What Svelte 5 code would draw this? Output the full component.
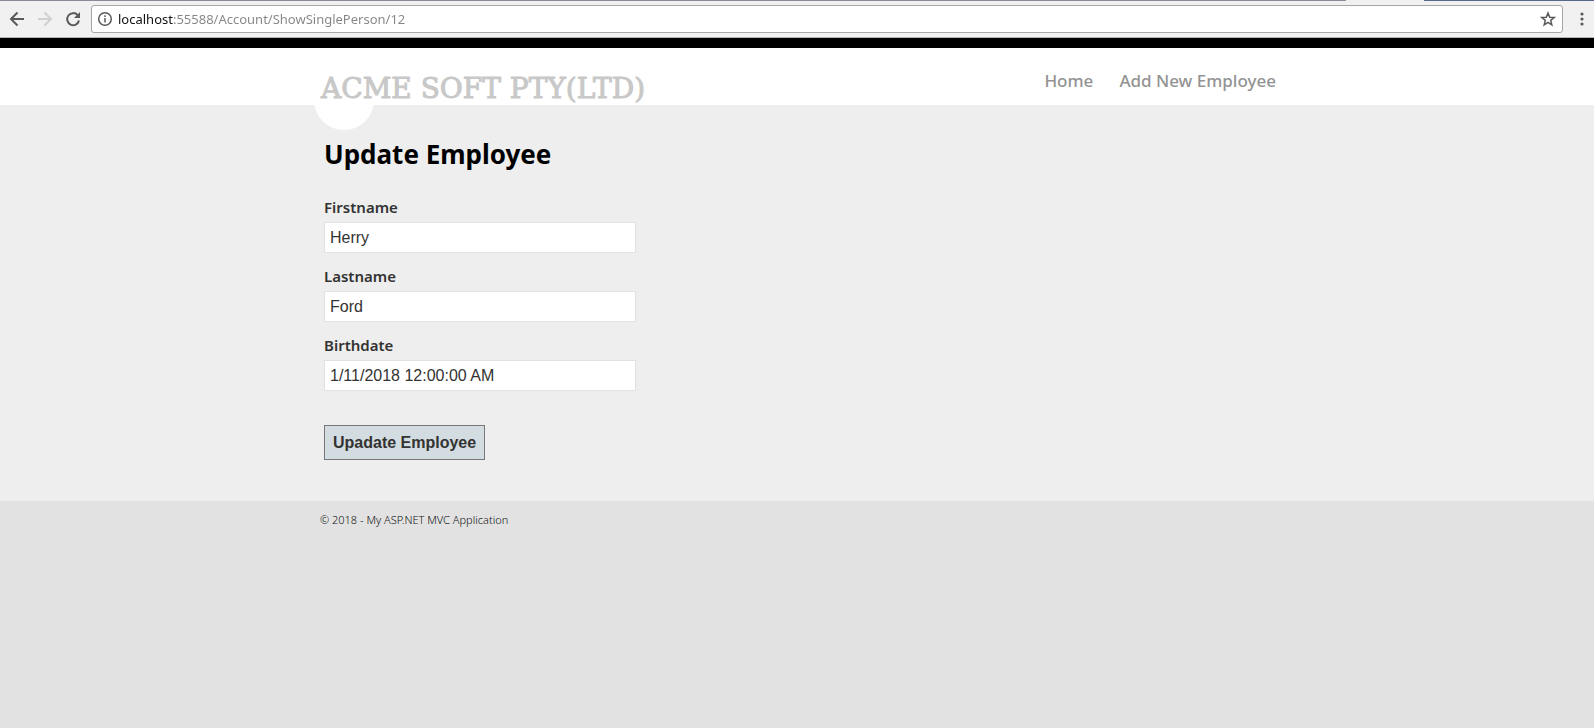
<script>
  let address = $state('localhost:55588/Account/ShowSinglePerson/12');
  let fields = $state([
    { id: 'firstname', label: 'Firstname', value: 'Herry' },
    { id: 'lastname', label: 'Lastname', value: 'Ford' },
    { id: 'birthdate', label: 'Birthdate', value: '1/11/2018 12:00:00 AM' },
  ]);
</script>

<div class="window">
  <div class="tab-edge"><span></span></div>
  <div class="toolbar">
    <button class="tool" type="button" aria-label="Back">
      <svg width="16" height="16" viewBox="0 0 16 16"><path d="M15 8H2.5M8.5 1.5 2 8l6.500 6.500" /></svg>
    </button>
    <button class="tool dim" type="button" aria-label="Forward" disabled>
      <svg width="16" height="16" viewBox="0 0 16 16"><path d="M1 8h12.500M7.500 1.500 14 8l-6.500 6.500" /></svg>
    </button>
    <button class="tool" type="button" aria-label="Reload">
      <svg width="16" height="16" viewBox="0 0 16 16">
        <path d="M12.700 4.200A6 6 0 1 0 14 9.500" />
        <path class="solid" d="M15 1v6H9z" />
      </svg>
    </button>
    <div class="omnibox">
      <svg class="info" width="16" height="16" viewBox="0 0 16 16">
        <circle cx="8" cy="8" r="6.300" />
        <path d="M8 7v4.500M8 4.300v1.600" />
      </svg>
      <input class="address" type="text" aria-label="Address" spellcheck="false" bind:value={address} />
      <button class="star" type="button" aria-label="Bookmark this page">
        <svg width="16" height="16" viewBox="0 0 16 16">
          <path d="M8 2l1.700 4.200 4.500.3-3.500 2.900 1.100 4.400L8 11.400l-3.800 2.400 1.100-4.400L1.800 6.500l4.500-.3z" />
        </svg>
      </button>
    </div>
    <button class="tool menu" type="button" aria-label="Menu">
      <svg width="16" height="16" viewBox="0 0 16 16">
        <circle cx="8" cy="3" r="1.600" /><circle cx="8" cy="8" r="1.600" /><circle cx="8" cy="13" r="1.600" />
      </svg>
    </button>
  </div>

  <header>
    <div class="wrap head">
      <a class="logo" href="#home">ACME SOFT PTY(LTD)</a>
      <nav>
        <a href="#home">Home</a>
        <a href="#add">Add New Employee</a>
      </nav>
    </div>
  </header>

  <main>
    <form class="wrap" onsubmit={(e) => e.preventDefault()}>
      <h1>Update Employee</h1>
      {#each fields as field (field.id)}
        <div class="field">
          <label for={field.id}>{field.label}</label>
          <input id={field.id} type="text" bind:value={field.value} />
        </div>
      {/each}
      <button class="submit" type="submit">Upadate Employee</button>
    </form>
  </main>

  <footer>
    <p class="wrap">© 2018 - My ASP.NET MVC Application</p>
  </footer>
</div>

<style>
  :global(body) {
    margin: 0;
    background: #e2e2e2;
  }
  .window {
    font-family: 'Noto Sans', 'Open Sans', sans-serif;
    color: #333;
  }
  .window * {
    box-sizing: border-box;
  }
  .tab-edge {
    display: flex;
    justify-content: flex-end;
    height: 1px;
    background: #8b8b96;
  }
  .tab-edge span {
    width: 248px;
    border-left: 78px solid #f1f1f1;
    background: #56688c;
  }
  .toolbar {
    display: flex;
    align-items: center;
    height: 37px;
    padding: 0 4px 0 3px;
    background: #f1f1f2;
    border-bottom: 1px solid #b4b4b4;
  }
  .tool,
  .star {
    display: flex;
    align-items: center;
    justify-content: center;
    flex: none;
    width: 28px;
    height: 28px;
    padding: 0;
    border: 0;
    background: none;
  }
  svg {
    display: block;
    flex: none;
    fill: none;
    stroke: #5a5a5a;
    stroke-width: 2;
  }
  .dim svg {
    stroke: #d0d0d0;
  }
  .solid,
  .menu svg {
    fill: #5a5a5a;
    stroke: none;
  }
  .menu {
    width: 16px;
    margin-left: 11px;
  }
  .omnibox {
    display: flex;
    flex: 1;
    align-items: center;
    min-width: 0;
    height: 28px;
    margin-left: 4px;
    padding: 0 0 0 5px;
    background: #fff;
    border: 1px solid #a6a6a6;
    border-radius: 3px;
  }
  .info,
  .star svg {
    stroke-width: 1.5;
  }
  .address {
    flex: 1;
    min-width: 0;
    height: 24px;
    margin-left: 5px;
    padding: 0;
    border: 0;
    outline: 0;
    font: 13px 'Noto Sans', 'Open Sans', sans-serif;
    color: transparent;
    caret-color: #000;
    background: linear-gradient(90deg, #111 55px, #858585 55px);
    background-clip: text;
  }
  .wrap {
    width: 100%;
    max-width: 960px;
    margin: 0 auto;
  }
  header {
    background: #fff;
    border-top: 10px solid #000;
  }
  .head {
    position: relative;
    display: flex;
    justify-content: space-between;
    align-items: flex-start;
    height: 57px;
    padding: 0 1px 0 4px;
  }
  .head::before {
    content: '';
    position: absolute;
    top: 22px;
    left: -3px;
    width: 60px;
    height: 60px;
    border-radius: 50%;
    background: #fff;
  }
  .logo {
    position: relative;
    padding-top: 23px;
    font: 28px/36px 'DejaVu Serif', serif;
    color: #c8c8c8;
    -webkit-text-stroke: 1px #c8c8c8;
    text-decoration: none;
    white-space: nowrap;
  }
  nav {
    display: flex;
    gap: 26px;
    padding-top: 21px;
  }
  nav a {
    font-size: 17px;
    font-weight: 500;
    line-height: 24px;
    color: #939393;
    text-decoration: none;
  }
  main {
    background: #eee;
  }
  form {
    padding: 31px 7px 41px;
  }
  h1 {
    margin: 0 0 25px;
    font-size: 26px;
    line-height: 36px;
    color: #000;
  }
  .field {
    display: flex;
    flex-direction: column;
    margin-bottom: 13px;
  }
  label {
    margin-bottom: 5px;
    font-size: 15px;
    font-weight: 600;
    line-height: 20px;
  }
  .field input {
    width: 312px;
    height: 31px;
    padding: 0 5px;
    border: 1px solid #e2e2e2;
    background: #fff;
    font: 16px 'Liberation Sans', Arial, sans-serif;
    color: #333;
  }
  .submit {
    display: block;
    height: 35px;
    margin-top: 34px;
    padding: 0 8px;
    border: 1px solid #787878;
    background: #d3dce0;
    font: bold 16px 'Liberation Sans', Arial, sans-serif;
    color: #333;
  }
  footer {
    background: #e2e2e2;
  }
  footer p {
    padding: 10px 3px;
    font-size: 11px;
    font-weight: 300;
    line-height: 18px;
    color: #111;
  }
</style>
